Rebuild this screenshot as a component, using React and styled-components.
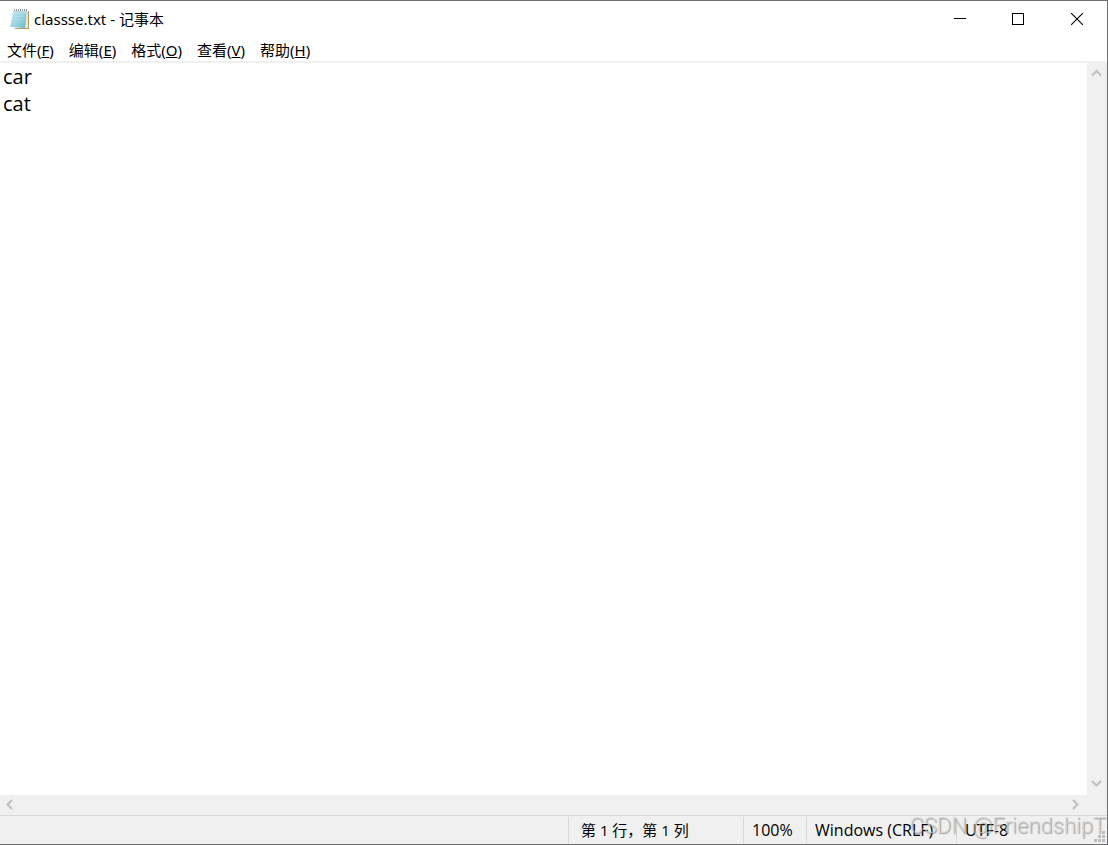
import React, { useState } from "react";
import styled, { createGlobalStyle } from "styled-components";

const GlobalStyle = createGlobalStyle`
  * {
    box-sizing: border-box;
  }

  body {
    margin: 0;
    background: #fff;
    color: #000;
    font-family: "Noto Sans", "Noto Sans CJK SC", sans-serif;
    font-size: 15px;
  }

  button, textarea {
    font: inherit;
    color: inherit;
    border: none;
    padding: 0;
    margin: 0;
    background: transparent;
  }
`;

const Window = styled.div`
  position: relative;
  display: flex;
  flex-direction: column;
  height: 100vh;
  border: 1px solid #6e6d70;
  border-left: none;
`;

const TitleBar = styled.header`
  display: flex;
  align-items: center;
  height: 35px;
  padding-left: 9px;
`;

const Title = styled.h1`
  flex: 1;
  margin: 0 0 0 4px;
  font-size: 15px;
  font-weight: 400;
  line-height: 20px;
`;

const WindowButton = styled.button`
  display: flex;
  align-items: center;
  justify-content: center;
  width: ${(props) => (props.$wide ? "60px" : "58px")};
  height: 34px;
`;

const MenuBar = styled.nav`
  display: flex;
  gap: 1px;
  height: 27px;
  padding-top: 2px;
  border-bottom: 2px solid #f0f0f0;
`;

const MenuItem = styled.button`
  padding: 0 7px;
  line-height: 24px;
  white-space: nowrap;
`;

const Workspace = styled.main`
  flex: 1;
  display: grid;
  grid-template-columns: 1fr 20px;
  grid-template-rows: 1fr 20px;
  min-height: 0;
  background: #f0f0f0;
`;

const Editor = styled.textarea`
  display: block;
  width: 100%;
  height: 100%;
  padding: 0 3px;
  background: #fff;
  font-family: "Open Sans", "Noto Sans CJK SC", sans-serif;
  font-size: 20px;
  line-height: 27px;
  resize: none;
  outline: none;
  overflow: hidden;
  white-space: pre;
`;

const ScrollTrack = styled.div`
  display: flex;
  flex-direction: ${(props) => (props.$vertical ? "column" : "row")};
  justify-content: space-between;
`;

const ScrollButton = styled.button`
  display: flex;
  align-items: center;
  justify-content: center;
  width: ${(props) => (props.$wide ? "24px" : "19px")};
  height: ${(props) => (props.$tall ? "24px" : "19px")};
`;

const StatusBar = styled.footer`
  display: flex;
  justify-content: flex-end;
  height: 29px;
  padding-top: 1px;
  background: #f0f0f0;
  border-top: 1px solid #d7d7d7;
`;

const StatusCell = styled.div`
  width: ${(props) => props.$width}px;
  height: 26px;
  padding-left: ${(props) => (props.$position ? "12px" : "8px")};
  border-left: 1px solid #d7d7d7;
  font-family: "Open Sans", "Noto Sans CJK SC", sans-serif;
  font-size: ${(props) => (props.$position ? "15px" : "16px")};
  line-height: 26px;
  white-space: nowrap;
`;

const Watermark = styled.span`
  position: absolute;
  right: 1px;
  bottom: 5px;
  color: rgba(215, 215, 215, 0.6);
  font-family: Roboto, sans-serif;
  font-size: 22px;
  font-weight: 300;
  line-height: 26px;
  text-shadow: 1px 1px 1px rgba(100, 100, 100, 0.6);
  pointer-events: none;
`;

const Grip = styled.svg`
  position: absolute;
  right: 2px;
  bottom: 2px;
`;

const menus = [
  { label: "文件", hotkey: "F" },
  { label: "编辑", hotkey: "E" },
  { label: "格式", hotkey: "O" },
  { label: "查看", hotkey: "V" },
  { label: "帮助", hotkey: "H" },
];

const chevrons = {
  up: "M1 8.5 L5.5 4 L10 8.5",
  down: "M1 3 L5.5 7.5 L10 3",
  left: "M8 1 L3.5 5.5 L8 10",
  right: "M3 1 L7.5 5.5 L3 10",
};

function Chevron({ direction }) {
  return (
    <svg width="11" height="11" viewBox="0 0 11 11" fill="none" stroke="#bfbfbf" strokeWidth="2">
      <path d={chevrons[direction]} />
    </svg>
  );
}

function NotepadIcon() {
  return (
    <svg width="21" height="22" viewBox="0 0 21 22">
      <defs>
        <linearGradient id="paper" x1="0" y1="0" x2="1" y2="1">
          <stop offset="0" stopColor="#d3eff5" />
          <stop offset="0.5" stopColor="#a3d8e5" />
          <stop offset="1" stopColor="#62b2c6" />
        </linearGradient>
      </defs>
      <path d="M18 3 L20 3 L20 21 L6 21 L6 20 L17 20 Z" fill="#b89a62" />
      <path d="M5 3 L19 3 L19 20 L16 20 Z" fill="#efe5cc" />
      <path d="M4 3 L18 3 L16 20 L1 19 Z" fill="url(#paper)" />
      <path d="M4 7 H17 M4 10 H17 M3 13 H16 M3 16 H16" stroke="#8ac8d8" strokeWidth="0.5" />
      <path d="M5 2 H19" stroke="#8b979a" strokeWidth="2" strokeDasharray="1 1" />
      <path d="M4 3.5 H18" stroke="#bcd5da" strokeWidth="1" />
    </svg>
  );
}

function App() {
  const [text, setText] = useState("car\ncat");

  return (
    <>
      <GlobalStyle />
      <Window>
        <TitleBar>
          <NotepadIcon />
          <Title>classse.txt - 记事本</Title>
          <WindowButton aria-label="最小化">
            <svg width="12" height="12" viewBox="0 0 12 12" shapeRendering="crispEdges">
              <path d="M0 5.5 H12" stroke="#000" />
            </svg>
          </WindowButton>
          <WindowButton aria-label="最大化">
            <svg width="12" height="12" viewBox="0 0 12 12" fill="none" shapeRendering="crispEdges">
              <rect x="0.5" y="0.5" width="11" height="11" stroke="#000" />
            </svg>
          </WindowButton>
          <WindowButton $wide aria-label="关闭">
            <svg width="12" height="12" viewBox="0 0 12 12">
              <path d="M0 0 L12 12 M12 0 L0 12" stroke="#000" strokeWidth="1.1" />
            </svg>
          </WindowButton>
        </TitleBar>
        <MenuBar>
          {menus.map((menu) => (
            <MenuItem key={menu.hotkey}>
              {menu.label}(<u>{menu.hotkey}</u>)
            </MenuItem>
          ))}
        </MenuBar>
        <Workspace>
          <Editor
            aria-label="文本编辑器"
            spellCheck={false}
            value={text}
            onChange={(e) => setText(e.target.value)}
          />
          <ScrollTrack $vertical>
            <ScrollButton aria-label="向上滚动">
              <Chevron direction="up" />
            </ScrollButton>
            <ScrollButton $tall aria-label="向下滚动">
              <Chevron direction="down" />
            </ScrollButton>
          </ScrollTrack>
          <ScrollTrack>
            <ScrollButton aria-label="向左滚动">
              <Chevron direction="left" />
            </ScrollButton>
            <ScrollButton $wide aria-label="向右滚动">
              <Chevron direction="right" />
            </ScrollButton>
          </ScrollTrack>
        </Workspace>
        <StatusBar>
          <StatusCell $width={175} $position>第 1 行，第 1 列</StatusCell>
          <StatusCell $width={63}>100%</StatusCell>
          <StatusCell $width={150}>Windows (CRLF)</StatusCell>
          <StatusCell $width={151}>UTF-8</StatusCell>
        </StatusBar>
        <Grip width="11" height="11" viewBox="0 0 11 11" fill="#bfbfbf" shapeRendering="crispEdges">
          <path d="M8 0h3v3h-3z M4 4h3v3h-3z M8 4h3v3h-3z M0 8h3v3h-3z M4 8h3v3h-3z M8 8h3v3h-3z" />
        </Grip>
        <Watermark>CSDN @FriendshipT</Watermark>
      </Window>
    </>
  );
}

export default App;
